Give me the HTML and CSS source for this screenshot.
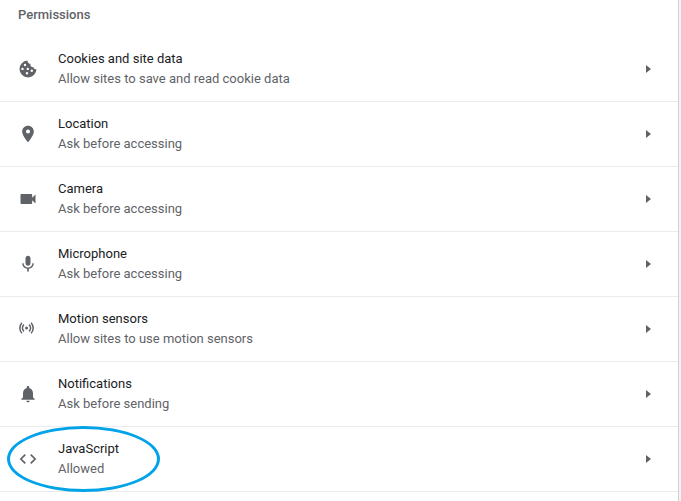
FILE: index.html
```html
<!DOCTYPE html>
<html lang="en">
<head>
    <meta charset="UTF-8">
    <meta name="viewport" content="width=device-width, initial-scale=1.0">
    <title>Site Settings</title>
    <link rel="stylesheet" href="styles.css">
</head>
<body>
    <main class="card">
        <h2>Permissions</h2>

        <button type="button" class="row">
            <svg class="icon" viewBox="0 0 20 20">
                <path fill-rule="evenodd" d="M9.500 1.500A8.500 8.500 0 1 0 18.500 10.300C17 10.600 15.700 9.800 15.500 8.200C13.300 8.300 12 6.800 12.400 5C10.500 4.700 9.400 3.200 9.500 1.500ZM7 4.800a1.200 1.200 0 1 1 0 2.400a1.200 1.200 0 1 1 0-2.400ZM4.500 8.700a1.200 1.200 0 1 1 0 2.400a1.200 1.200 0 1 1 0-2.400ZM9.800 8.700a1.200 1.200 0 1 1 0 2.400a1.200 1.200 0 1 1 0-2.400ZM13.800 10.500a1.200 1.200 0 1 1 0 2.400a1.200 1.200 0 1 1 0-2.400ZM9 13a1.200 1.200 0 1 1 0 2.400a1.200 1.200 0 1 1 0-2.400Z"/>
            </svg>
            <span class="text">
                <span class="label">Cookies and site data</span>
                <span class="sub">Allow sites to save and read cookie data</span>
            </span>
            <svg class="arrow" viewBox="0 0 5 8"><path d="M0 0L5 4L0 8Z"/></svg>
        </button>

        <button type="button" class="row">
            <svg class="icon" viewBox="0 0 24 24">
                <path d="M12 2C8.130 2 5 5.130 5 9c0 5.250 7 13 7 13s7-7.750 7-13c0-3.870-3.130-7-7-7zm0 9.500a2.500 2.500 0 1 1 0-5 2.500 2.500 0 0 1 0 5z"/>
            </svg>
            <span class="text">
                <span class="label">Location</span>
                <span class="sub">Ask before accessing</span>
            </span>
            <svg class="arrow" viewBox="0 0 5 8"><path d="M0 0L5 4L0 8Z"/></svg>
        </button>

        <button type="button" class="row">
            <svg class="icon" viewBox="0 0 24 24">
                <path d="M17 10.500V7c0-.55-.45-1-1-1H4c-.55 0-1 .45-1 1v10c0 .55.45 1 1 1h12c.55 0 1-.45 1-1v-3.500l4 4v-11l-4 4z"/>
            </svg>
            <span class="text">
                <span class="label">Camera</span>
                <span class="sub">Ask before accessing</span>
            </span>
            <svg class="arrow" viewBox="0 0 5 8"><path d="M0 0L5 4L0 8Z"/></svg>
        </button>

        <button type="button" class="row">
            <svg class="icon" viewBox="0 0 24 24">
                <path d="M12 14c1.660 0 2.990-1.340 2.990-3L15 5c0-1.660-1.340-3-3-3S9 3.340 9 5v6c0 1.660 1.340 3 3 3zm5.300-3c0 3-2.540 5.100-5.300 5.100S6.700 14 6.700 11H5c0 3.410 2.720 6.230 6 6.720V21h2v-3.280c3.280-.48 6-3.300 6-6.720h-1.700z"/>
            </svg>
            <span class="text">
                <span class="label">Microphone</span>
                <span class="sub">Ask before accessing</span>
            </span>
            <svg class="arrow" viewBox="0 0 5 8"><path d="M0 0L5 4L0 8Z"/></svg>
        </button>

        <button type="button" class="row">
            <svg class="icon" viewBox="0 0 20 20">
                <circle cx="8.500" cy="9" r="1.500"/>
                <path class="line" d="M6 5.700A4.200 4.200 0 0 0 6 12.300M11 5.700A4.200 4.200 0 0 1 11 12.300M4 3.700A7.500 7.500 0 0 0 4 14.300M13 3.700A7.500 7.500 0 0 1 13 14.300"/>
            </svg>
            <span class="text">
                <span class="label">Motion sensors</span>
                <span class="sub">Allow sites to use motion sensors</span>
            </span>
            <svg class="arrow" viewBox="0 0 5 8"><path d="M0 0L5 4L0 8Z"/></svg>
        </button>

        <button type="button" class="row">
            <svg class="icon" viewBox="0 0 24 24">
                <path d="M12 22c1.100 0 2-.9 2-2h-4c0 1.100.89 2 2 2zm6-6v-5c0-3.070-1.640-5.640-4.500-6.320V4c0-.83-.67-1.500-1.500-1.500s-1.500.67-1.500 1.500v.68C7.630 5.360 6 7.920 6 11v5l-2 2v1h16v-1l-2-2z"/>
            </svg>
            <span class="text">
                <span class="label">Notifications</span>
                <span class="sub">Ask before sending</span>
            </span>
            <svg class="arrow" viewBox="0 0 5 8"><path d="M0 0L5 4L0 8Z"/></svg>
        </button>

        <button type="button" class="row">
            <svg class="icon" viewBox="0 0 24 24">
                <path d="M9.400 16.600L4.800 12l4.600-4.600L8 6l-6 6 6 6 1.400-1.400zm5.200 0l4.600-4.600-4.600-4.600L16 6l6 6-6 6-1.400-1.400z"/>
            </svg>
            <span class="text">
                <span class="label">JavaScript</span>
                <span class="sub">Allowed</span>
            </span>
            <svg class="arrow" viewBox="0 0 5 8"><path d="M0 0L5 4L0 8Z"/></svg>
            <span class="circle"></span>
        </button>
    </main>
</body>
</html>
```

FILE: styles.css
```css
body {
    margin: 0;
    background-color: #f1f3f4;
    font-family: Roboto, Arial, sans-serif;
    font-size: 13px;
    line-height: 20px;
}

.card {
    box-sizing: border-box;
    min-height: 100vh;
    margin-right: 2px;
    border-right: 1px solid #cdd1d4;
    background-color: white;
}

h2 {
    margin: 0;
    padding: 5px 18px 12px;
    color: #5f6368;
    font-size: 13px;
    font-weight: 500;
}

.row {
    position: relative;
    display: flex;
    align-items: center;
    width: 100%;
    padding: 12px 27px 12px 18px;
    border: none;
    border-bottom: 1px solid #ebebeb;
    background: none;
    font: inherit;
    text-align: left;
    cursor: pointer;
}

.icon {
    width: 20px;
    height: 20px;
    margin-right: 20px;
    fill: #5f6368;
}

.line {
    fill: none;
    stroke: #5f6368;
    stroke-width: 1.5;
}

.text {
    flex: 1;
}

.label,
.sub {
    display: block;
}

.label {
    color: #202124;
}

.sub {
    color: #5f6368;
}

.arrow {
    width: 5px;
    height: 8px;
    fill: #5f6368;
}

/* highlight drawn around the JavaScript setting */
.circle {
    position: absolute;
    top: -1px;
    left: 7px;
    box-sizing: border-box;
    width: 153px;
    height: 66px;
    border: 3px solid #00a2e8;
    border-radius: 50%;
}
```
